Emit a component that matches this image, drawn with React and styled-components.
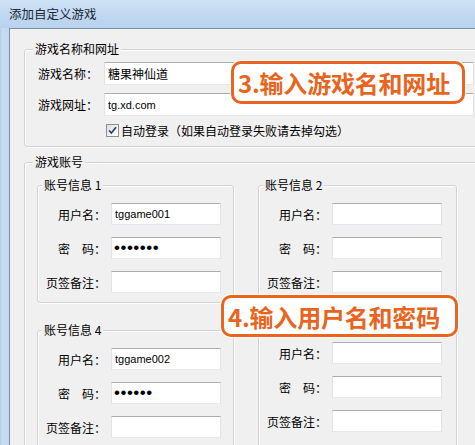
import React from 'react'
import styled, { createGlobalStyle } from 'styled-components'

const GlobalStyle = createGlobalStyle`
  html, body {
    margin: 0;
    padding: 0;
    width: 475px;
    height: 445px;
    overflow: hidden;
    background: #f0f0f0;
  }
  body {
    font-family: "Noto Sans CJK SC", "Liberation Sans", sans-serif;
    font-size: 12px;
    color: #000;
  }
`

const Window = styled.div`
  position: relative;
  width: 500px;
  height: 445px;
  display: flex;
  flex-direction: column;
  background: #c2d9f1;
`

const TitleBar = styled.div`
  height: 28px;
  flex: none;
  padding-left: 9px;
  line-height: 28px;
  font-size: 12.5px;
  color: #1b2633;
  background: linear-gradient(180deg, #cfe2f6 0%, #bed7f0 60%, #b9d3ee 100%);
`

const Body = styled.div`
  flex: 1;
  display: flex;
  min-height: 0;
`

const SideFrame = styled.div`
  width: 9px;
  flex: none;
  background: linear-gradient(90deg, #b3cbe4 0, #c6dcf2 2px, #c0d8f0 100%);
`

const Client = styled.div`
  flex: 1;
  background: #f0f0f0;
  border-top: 1px solid #7f8fa0;
  border-left: 1px solid #7f8fa0;
  padding: 13px 12px 0 14px;
  display: flex;
  flex-direction: column;
  gap: 8px;
`

const GroupBox = styled.fieldset`
  margin: 0;
  min-width: 0;
  padding: ${({ $pad }) => $pad};
  border: 1px solid #d3d3d3;
  border-radius: 3px;
  box-shadow: inset 1px 1px 0 #fff, 1px 1px 0 #fff;
`

const Legend = styled.legend`
  padding: 0 2px;
  margin-left: ${({ $offset }) => $offset}px;
  line-height: 14px;
  background: #f0f0f0;
  white-space: nowrap;
`

const Stack = styled.div`
  display: flex;
  flex-direction: column;
  gap: 8px;
`

const FieldRow = styled.div`
  display: flex;
  align-items: center;
  height: 23px;
`

const FieldLabel = styled.label`
  width: 66px;
  flex: none;
  white-space: nowrap;
`

const TextBox = styled.input`
  box-sizing: border-box;
  width: ${({ $width }) => ($width ? `${$width}px` : 'auto')};
  flex: ${({ $width }) => ($width ? 'none' : '1')};
  min-width: 0;
  height: ${({ $height }) => $height || 23}px;
  margin: 0;
  padding: 0 3px;
  border: 1px solid #e2e3ea;
  border-top-color: #abadb3;
  border-bottom-color: #e3e9ef;
  background: #fff;
  font-family: "Liberation Sans", "Noto Sans CJK SC", sans-serif;
  font-size: ${({ $cjk }) => ($cjk ? 12 : 11)}px;
  color: #000;
  outline: none;
`

const PasswordBox = styled(TextBox)`
  font-size: 17px;
  letter-spacing: 0.5px;
  padding-left: 2px;
`

const CheckRow = styled.label`
  display: flex;
  align-items: center;
  gap: 2px;
  height: 13px;
  margin-left: 68px;
  white-space: nowrap;
`

const CheckMark = styled.span`
  box-sizing: border-box;
  width: 13px;
  height: 13px;
  flex: none;
  display: flex;
  align-items: center;
  justify-content: center;
  border: 1px solid #8e8f8f;
  background: linear-gradient(135deg, #dcdcdc 0%, #f4f4f4 60%, #ffffff 100%);
`

const AccountGrid = styled.div`
  display: grid;
  grid-template-columns: 197px 199px;
  column-gap: 24px;
  row-gap: 20px;
`

const AccountBox = styled.fieldset`
  margin: 0;
  min-width: 0;
  padding: ${({ $untitled }) => ($untitled ? '18px' : '11px')} 0 9px 6px;
  border: 1px solid #d3d3d3;
  border-radius: 3px;
  box-shadow: inset 1px 1px 0 #fff, 1px 1px 0 #fff;
`

const AccountFields = styled.div`
  display: grid;
  grid-template-columns: 62px 110px;
  column-gap: 5px;
  row-gap: 12px;
  align-items: center;
`

const AccountLabel = styled.span`
  text-align: right;
  white-space: nowrap;
`

const Callout = styled.div`
  position: absolute;
  left: ${({ $left }) => $left}px;
  top: ${({ $top }) => $top}px;
  width: ${({ $width }) => $width}px;
  height: ${({ $height }) => $height}px;
  box-sizing: border-box;
  display: flex;
  align-items: center;
  padding-left: ${({ $indent }) => $indent}px;
  border: 3px solid #e9641d;
  border-radius: 10px;
  background: #fff;
  color: #e9641d;
  font-family: "Noto Sans CJK SC", "Liberation Sans", sans-serif;
  font-size: 24px;
  font-weight: 700;
  letter-spacing: -0.2px;
  white-space: nowrap;
  box-shadow: 0 0 0 1px rgba(255, 255, 255, 0.8);
`

// the fifth box's caption sits under the second callout, so it is left out
const accounts = [
  { id: 1, title: '账号信息 1', user: 'tggame001', pass: 'abcdefg' },
  { id: 2, title: '账号信息 2', user: '', pass: '' },
  { id: 4, title: '账号信息 4', user: 'tggame002', pass: 'abcdef' },
  { id: 5, title: null, user: '', pass: '' },
]

function Account({ title, user, pass }) {
  return (
    <AccountBox $untitled={!title}>
      {title && <Legend $offset={-2}>{title}</Legend>}
      <AccountFields>
        <AccountLabel>用户名：</AccountLabel>
        <TextBox $width={110} $height={22} defaultValue={user} />
        <AccountLabel>密　码：</AccountLabel>
        <PasswordBox type="password" $width={110} $height={22} defaultValue={pass} />
        <AccountLabel>页签备注：</AccountLabel>
        <TextBox $width={110} $height={22} defaultValue="" />
      </AccountFields>
    </AccountBox>
  )
}

export default function App() {
  return (
    <>
      <GlobalStyle />
      <Window>
        <TitleBar>添加自定义游戏</TitleBar>
        <Body>
          <SideFrame />
          <Client>
            <GroupBox $pad="6px 13px 9px 13px">
              <Legend $offset={-5}>游戏名称和网址</Legend>
              <Stack>
                <FieldRow>
                  <FieldLabel>游戏名称：</FieldLabel>
                  <TextBox $cjk defaultValue="糖果神仙道" />
                </FieldRow>
                <FieldRow>
                  <FieldLabel>游戏网址：</FieldLabel>
                  <TextBox defaultValue="tg.xd.com" />
                </FieldRow>
                <CheckRow>
                  <CheckMark>
                    <svg width="9" height="9" viewBox="0 0 9 9">
                      <path d="M1 4.5 L3.4 7 L8 1.2" fill="none" stroke="#2b3f6e" strokeWidth="1.7" />
                    </svg>
                  </CheckMark>
                  自动登录（如果自动登录失败请去掉勾选）
                </CheckRow>
              </Stack>
            </GroupBox>
            <GroupBox $pad="9px 12px 12px 12px">
              <Legend $offset={-4}>游戏账号</Legend>
              <AccountGrid>
                {accounts.map((a) => (
                  <Account key={a.id} {...a} />
                ))}
              </AccountGrid>
            </GroupBox>
          </Client>
        </Body>
        <Callout $left={231} $top={61} $width={234} $height={43} $indent={4}>
          3.输入游戏名和网址
        </Callout>
        <Callout $left={221} $top={295} $width={237} $height={42} $indent={4}>
          4.输入用户名和密码
        </Callout>
      </Window>
    </>
  )
}
